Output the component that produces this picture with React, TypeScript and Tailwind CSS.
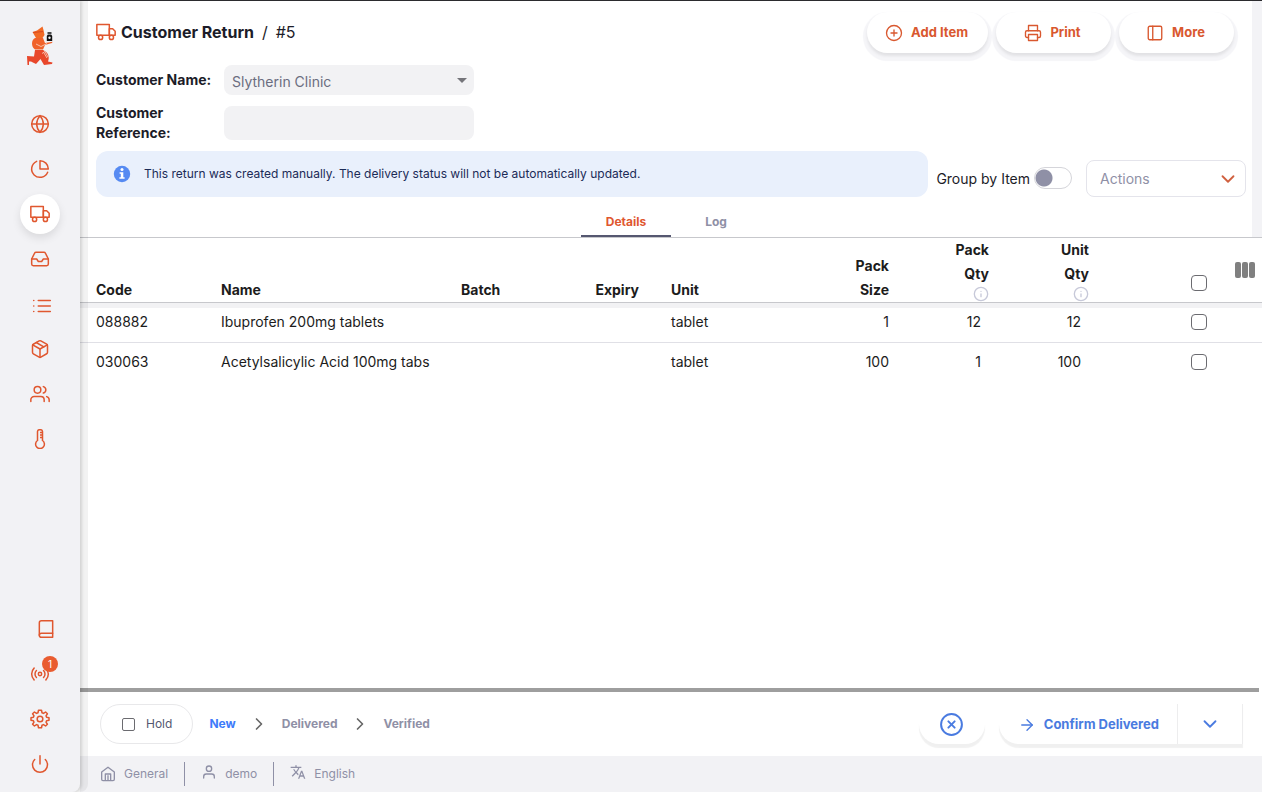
import { useState } from "react";
import type { ReactNode } from "react";
import {
  FiArrowRight,
  FiBook,
  FiChevronDown,
  FiChevronRight,
  FiGlobe,
  FiInbox,
  FiInfo,
  FiList,
  FiPackage,
  FiPieChart,
  FiPlusCircle,
  FiPrinter,
  FiPower,
  FiRadio,
  FiSidebar,
  FiTruck,
  FiUser,
  FiUsers,
  FiXCircle,
} from "react-icons/fi";
import { MdTranslate } from "react-icons/md";

const lines = [
  { code: "088882", name: "Ibuprofen 200mg tablets", unit: "tablet", packSize: 1, packs: 12, units: 12 },
  { code: "030063", name: "Acetylsalicylic Acid 100mg tabs", unit: "tablet", packSize: 100, packs: 1, units: 100 },
];

const checkbox =
  "appearance-none bg-white border border-[#6b6b70] checked:bg-[#e95c30] align-middle";

function Logo() {
  return (
    <svg width="26" height="40" viewBox="0 0 26 40" aria-hidden="true">
      <path d="M15.5 0.5 L16.5 4 L17.5 9 L15.5 12 L9 12 L5.5 6 L10 4.5 Z" fill="#f26a25" />
      <path d="M6 6.5 L16 5.5" stroke="#d9481f" strokeWidth="1" />
      <path d="M8 12 C4 14 4 21 8 23.5 L16 23.5 L18 19 L25 17 L25.5 15.8 L18 17 L16 12 Z" fill="#f0622a" />
      <path d="M9 18 L14 20.5 L20 17.5" stroke="#f9d8c8" strokeWidth="0.8" fill="none" />
      <path d="M8 24 L16 24 C21 26 23 31 21 35.5 L25.5 36.5 L25 38 L17 39 L13.5 33 L9 38 L4 35.5 L2 35.5 L2 39 L0.5 39 L0 30 L7 30.5 Z" fill="#e8472b" />
      <path d="M15 27.5 L18 25.5 L21 31 M17 27 L20 32" stroke="#f9d8c8" strokeWidth="0.8" fill="none" />
      <path d="M20.5 6.2 H24.5 V7.8 H20.5 Z M20.8 8.5 H24.2 L25.2 10 V15 H19.8 V10 Z" fill="#111" />
      <circle cx="22.5" cy="11.8" r="1.2" fill="#f2f2f5" />
    </svg>
  );
}

function ThermometerIcon() {
  return (
    <svg width="20" height="20" viewBox="0 0 20 20" fill="none" stroke="currentColor" strokeWidth="1.5" aria-hidden="true">
      <path d="M7.5 11.5 V2.5 A2 2 0 0 1 9.5 0.7 H10.5 A2 2 0 0 1 12.5 2.5 V11.5 A4.4 4.4 0 1 1 7.5 11.5 Z" />
      <path d="M10 3.5 H12.5 M10 6 H12.5 M10 8.5 H12.5" />
    </svg>
  );
}

function GearIcon() {
  return (
    <svg width="20" height="20" viewBox="0 0 24 24" fill="none" stroke="currentColor" strokeWidth="1.8" strokeLinejoin="round" aria-hidden="true">
      <circle cx="12" cy="12" r="3.4" />
      <path d="M10.2 1.5 H13.8 L14.4 4.5 L16.2 5.3 L18.7 3.6 L20.9 5.7 L19.2 8.2 L19.9 9.9 L22.8 10.4 V13.6 L19.9 14.1 L19.2 15.8 L20.9 18.3 L18.7 20.4 L16.2 18.7 L14.4 19.5 L13.8 22.5 H10.2 L9.6 19.5 L7.8 18.7 L5.3 20.4 L3.1 18.3 L4.8 15.8 L4.1 14.1 L1.2 13.6 V10.4 L4.1 9.9 L4.8 8.2 L3.1 5.7 L5.3 3.6 L7.8 5.3 L9.6 4.5 Z" />
    </svg>
  );
}

function HomeIcon() {
  return (
    <svg width="16" height="16" viewBox="0 0 24 24" fill="none" stroke="currentColor" strokeWidth="2" strokeLinejoin="round" aria-hidden="true">
      <path d="M2.5 9 L12 1.8 L21.5 9 V20 A2 2 0 0 1 19.5 22 H4.5 A2 2 0 0 1 2.5 20 Z" />
      <path d="M8 22 V12 H16 V22 M12 14 V22" />
    </svg>
  );
}

function InfoBadge() {
  return (
    <svg width="20" height="20" viewBox="0 0 20 20" aria-hidden="true">
      <circle cx="10" cy="10" r="8.2" fill="#568af2" />
      <circle cx="10" cy="5.6" r="1.5" fill="#fff" />
      <path d="M7.6 8.2 H11.3 V13.2 H12.6 V14.8 H7.4 V13.2 H8.8 V9.7 H7.6 Z" fill="#fff" />
    </svg>
  );
}

function NavItem({ label, active, children }: { label: string; active?: boolean; children: ReactNode }) {
  return (
    <a
      href="#"
      aria-label={label}
      className={
        active
          ? "relative flex size-10 items-center justify-center rounded-full bg-white shadow-[0_4px_8px_rgba(0,0,0,0.1)]"
          : "relative flex size-10 items-center justify-center"
      }
    >
      {children}
    </a>
  );
}

function Sidebar() {
  return (
    <aside className="relative z-10 flex w-20 shrink-0 flex-col items-center rounded-br-lg bg-[#f2f2f5] pt-[25px] pb-2 text-[20px] text-[#e0572f] shadow-[2px_0_3px_rgba(0,0,0,0.13),8px_0_0_rgba(0,0,0,0.05)]">
      <Logo />
      <nav className="mt-[38px] flex flex-col gap-[5px]">
        <NavItem label="Catalogue"><FiGlobe strokeWidth={1.8} /></NavItem>
        <NavItem label="Dashboard"><FiPieChart strokeWidth={1.8} /></NavItem>
        <NavItem label="Distribution" active><FiTruck strokeWidth={1.8} /></NavItem>
        <NavItem label="Replenishment"><FiInbox strokeWidth={1.8} /></NavItem>
        <NavItem label="Lists"><FiList className="mt-1 ml-1 text-[22px]" strokeWidth={1.8} /></NavItem>
        <NavItem label="Inventory"><FiPackage strokeWidth={1.8} /></NavItem>
        <NavItem label="Dispensary"><FiUsers strokeWidth={1.8} /></NavItem>
        <NavItem label="Cold chain"><ThermometerIcon /></NavItem>
      </nav>
      <nav className="mt-auto flex flex-col items-center gap-[5px]">
        <div className="pl-3">
          <NavItem label="Docs"><FiBook strokeWidth={1.8} /></NavItem>
        </div>
        <NavItem label="Sync">
          <FiRadio strokeWidth={1.8} />
          <span className="absolute top-[2px] left-[22px] flex size-4 items-center justify-center rounded-full bg-[#e95c30] text-[10px] text-white">1</span>
        </NavItem>
        <NavItem label="Settings"><GearIcon /></NavItem>
        <NavItem label="Log out"><FiPower strokeWidth={1.8} /></NavItem>
      </nav>
    </aside>
  );
}

function PillButton({ icon, label }: { icon: ReactNode; label: string }) {
  return (
    <button className="flex h-[41px] min-w-[115px] items-center justify-center gap-2 rounded-full bg-white pt-px pr-5 pl-[18px] text-[13px] font-bold text-[#d9582f] shadow-[0_3px_3px_rgba(0,0,0,0.08),0_4px_1px_4px_#f5f5f8]">
      <span className="text-[18px]">{icon}</span>
      {label}
    </button>
  );
}

function Header({ tab, setTab }: { tab: string; setTab: (t: string) => void }) {
  return (
    <header className="border-b border-[#c7c8cc] bg-[linear-gradient(to_left,#f3f3f6_10px,#ffffff_10px)]">
      <div className="flex items-start justify-between pt-[11px] pr-7 pl-4">
        <h1 className="flex items-center pt-2 text-[16px] leading-6 text-[#1c1c28]">
          <FiTruck className="mr-[5px] text-[20px] text-[#e0572f]" strokeWidth={1.8} />
          <span className="font-bold">Customer Return</span>
          <span className="mx-2">/</span>
          <span>#5</span>
        </h1>
        <div className="flex gap-2">
          <PillButton icon={<FiPlusCircle strokeWidth={1.8} />} label="Add Item" />
          <PillButton icon={<FiPrinter strokeWidth={1.8} />} label="Print" />
          <PillButton icon={<FiSidebar strokeWidth={1.8} />} label="More" />
        </div>
      </div>

      <div className="mt-3 grid grid-cols-[120px_250px] items-center gap-x-2 pl-4 text-[14px] leading-5">
        <label htmlFor="customer" className="font-bold text-[#1c1c28]">Customer Name:</label>
        <div className="relative">
          <select id="customer" className="h-[30px] w-full appearance-none rounded-lg bg-[#f2f2f4] px-2 pt-1 text-[14px] text-[#6b6d80]">
            <option>Slytherin Clinic</option>
          </select>
          <span className="pointer-events-none absolute top-[13px] right-[7px] border-x-5 border-t-5 border-x-transparent border-t-[#75757a]"></span>
        </div>
        <label htmlFor="reference" className="mt-2 font-bold text-[#1c1c28]">Customer Reference:</label>
        <input id="reference" className="mt-2 h-[34px] w-full rounded-lg bg-[#f2f2f4] px-2" />
      </div>

      <div className="mt-2 flex items-center pr-4 pl-4">
        <div className="flex h-[46px] flex-1 items-center gap-3 rounded-xl bg-[#e9f0fc] px-4 text-[12px] text-[#1b2b57]">
          <InfoBadge />
          This return was created manually. The delivery status will not be automatically updated.
        </div>
        <label className="ml-2 flex items-center gap-1 pt-2 text-[14px] text-[#1c1c28]">
          Group by Item
          <input
            type="checkbox"
            role="switch"
            className="h-[22px] w-[38px] appearance-none rounded-full border border-[#d5d5da] bg-[radial-gradient(circle_at_9px_10px,#8f90a6_8px,transparent_9px)]"
          />
        </label>
        <div className="relative mt-2 ml-[14px]">
          <select aria-label="Actions" className="h-[37px] w-40 appearance-none rounded-lg border border-[#e4e4eb] bg-white px-[13px] text-[14px] text-[#8f90a6]">
            <option>Actions</option>
          </select>
          <FiChevronDown className="pointer-events-none absolute top-2 right-[7px] text-[22px] text-[#d0603f]" />
        </div>
      </div>

      <div className="mt-2 flex justify-center text-[12px] font-bold">
        {["Details", "Log"].map((t) => (
          <button
            key={t}
            onClick={() => setTab(t)}
            className={
              tab === t
                ? "h-8 w-[90px] border-b-2 border-[#555770] pt-1 text-[#e0572f]"
                : "h-8 w-[90px] border-b-2 border-transparent pt-1 text-[#8f90a6]"
            }
          >
            {t}
          </button>
        ))}
      </div>
    </header>
  );
}

function LinesTable() {
  return (
    <table className="w-full table-fixed text-[14px] text-[#1c1c1c]">
      <colgroup>
        <col className="w-[125px]" />
        <col />
        <col className="w-[110px]" />
        <col className="w-[100px]" />
        <col className="w-[150px]" />
        <col className="w-[100px]" />
        <col className="w-[100px]" />
        <col className="w-[100px]" />
        <col className="w-[118px]" />
        <col className="w-[39px]" />
      </colgroup>
      <thead className="shadow-[0_5px_0_#f2f2f4]">
        <tr className="border-b border-[#c7c8cc] align-bottom leading-6 font-bold">
          <th className="px-4 text-left">Code</th>
          <th className="px-4 text-left">Name</th>
          <th className="px-4 text-left">Batch</th>
          <th className="px-4 text-right">Expiry</th>
          <th className="px-4 text-left">Unit</th>
          <th className="pr-4 pl-11 text-right">Pack Size</th>
          {["Pack Qty", "Unit Qty"].map((h) => (
            <th key={h} className="pr-4 pl-11 text-right">
              {h}
              <FiInfo className="ml-auto text-[16px] text-[#c7c9d9]" />
            </th>
          ))}
          <th className="px-4 pb-2 text-right">
            <input type="checkbox" aria-label="Select all" className={`${checkbox} size-4 rounded-sm`} />
          </th>
          <th className="pb-6 pl-3">
            <button aria-label="Columns" className="flex h-4 gap-px">
              <span className="h-4 w-[6px] rounded-xs bg-[#808080]"></span>
              <span className="h-4 w-[6px] rounded-xs bg-[#808080]"></span>
              <span className="h-4 w-[6px] rounded-xs bg-[#808080]"></span>
            </button>
          </th>
        </tr>
      </thead>
      <tbody>
        {lines.map((line) => (
          <tr key={line.code} className="h-10 border-b border-[#e0e0e6] last:border-b-0">
            <td className="px-4 pb-[2px]">{line.code}</td>
            <td className="px-4 pb-[2px] whitespace-nowrap">{line.name}</td>
            <td></td>
            <td></td>
            <td className="px-4 pb-[2px]">{line.unit}</td>
            <td className="px-4 pb-[2px] text-right">{line.packSize}</td>
            <td className="px-6 pb-[2px] text-right">{line.packs}</td>
            <td className="px-6 pb-[2px] text-right">{line.units}</td>
            <td className="px-4 pb-1 text-right">
              <input type="checkbox" aria-label={`Select ${line.name}`} className={`${checkbox} size-4 rounded-sm`} />
            </td>
            <td></td>
          </tr>
        ))}
      </tbody>
    </table>
  );
}

function StatusBar() {
  return (
    <div className="flex h-16 items-center pr-[19px] pl-5 text-[12px]">
      <label className="flex h-10 items-center gap-[11px] rounded-full border border-[#e8e8ea] pr-5 pl-[21px] text-[#555770]">
        <input type="checkbox" className={`${checkbox} size-[13px] rounded-xs`} />
        Hold
      </label>
      <div className="ml-4 flex items-center gap-[13px] font-bold text-[#8f90a6]">
        <span className="text-[#3e7bfa]">New</span>
        <FiChevronRight className="text-[20px] text-[#666]" />
        <span>Delivered</span>
        <FiChevronRight className="text-[20px] text-[#666]" />
        <span>Verified</span>
      </div>
      <button aria-label="Close" className="ml-auto flex h-10 w-[66px] items-center justify-center rounded-full bg-white text-[25px] text-[#4a7be0] shadow-[0_4px_1px_rgba(0,0,0,0.06)]">
        <FiXCircle strokeWidth={1.9} />
      </button>
      <div className="ml-[14px] flex h-10 rounded-l-full rounded-r-lg bg-white text-[13px] font-bold text-[#4a7be0] shadow-[0_4px_1px_rgba(0,0,0,0.06)]">
        <button className="flex items-center gap-2 pt-px pr-[18px] pl-[19px]">
          <FiArrowRight className="text-[18px]" strokeWidth={1.8} />
          Confirm Delivered
        </button>
        <button aria-label="More statuses" className="flex w-[66px] items-center justify-center border-x border-[#ededee] text-[22px]">
          <FiChevronDown />
        </button>
      </div>
    </div>
  );
}

function Footer() {
  return (
    <footer className="flex h-9 items-center bg-[#f2f2f5] pl-5 text-[12px] text-[#8f90a6]">
      <span className="flex items-center gap-2">
        <HomeIcon />
        General
      </span>
      <span className="mx-4 h-6 w-px bg-[#8f90a6]"></span>
      <span className="flex items-center gap-2">
        <FiUser className="mb-1 text-[16px]" />
        demo
      </span>
      <span className="mx-4 h-6 w-px bg-[#8f90a6]"></span>
      <span className="flex items-center gap-2">
        <MdTranslate className="mb-1 text-[16px]" />
        English
      </span>
    </footer>
  );
}

export default function App() {
  const [tab, setTab] = useState("Details");

  return (
    <div className="flex h-screen border-t border-[#2b2b2e] bg-white font-['Inter',sans-serif]">
      <Sidebar />
      <main className="flex min-w-0 flex-1 flex-col">
        <Header tab={tab} setTab={setTab} />
        <section className="min-h-0 flex-1 overflow-auto">
          <LinesTable />
        </section>
        <div className="mr-[3px] h-1 bg-[#9e9e9e]"></div>
        <StatusBar />
        <Footer />
      </main>
    </div>
  );
}
